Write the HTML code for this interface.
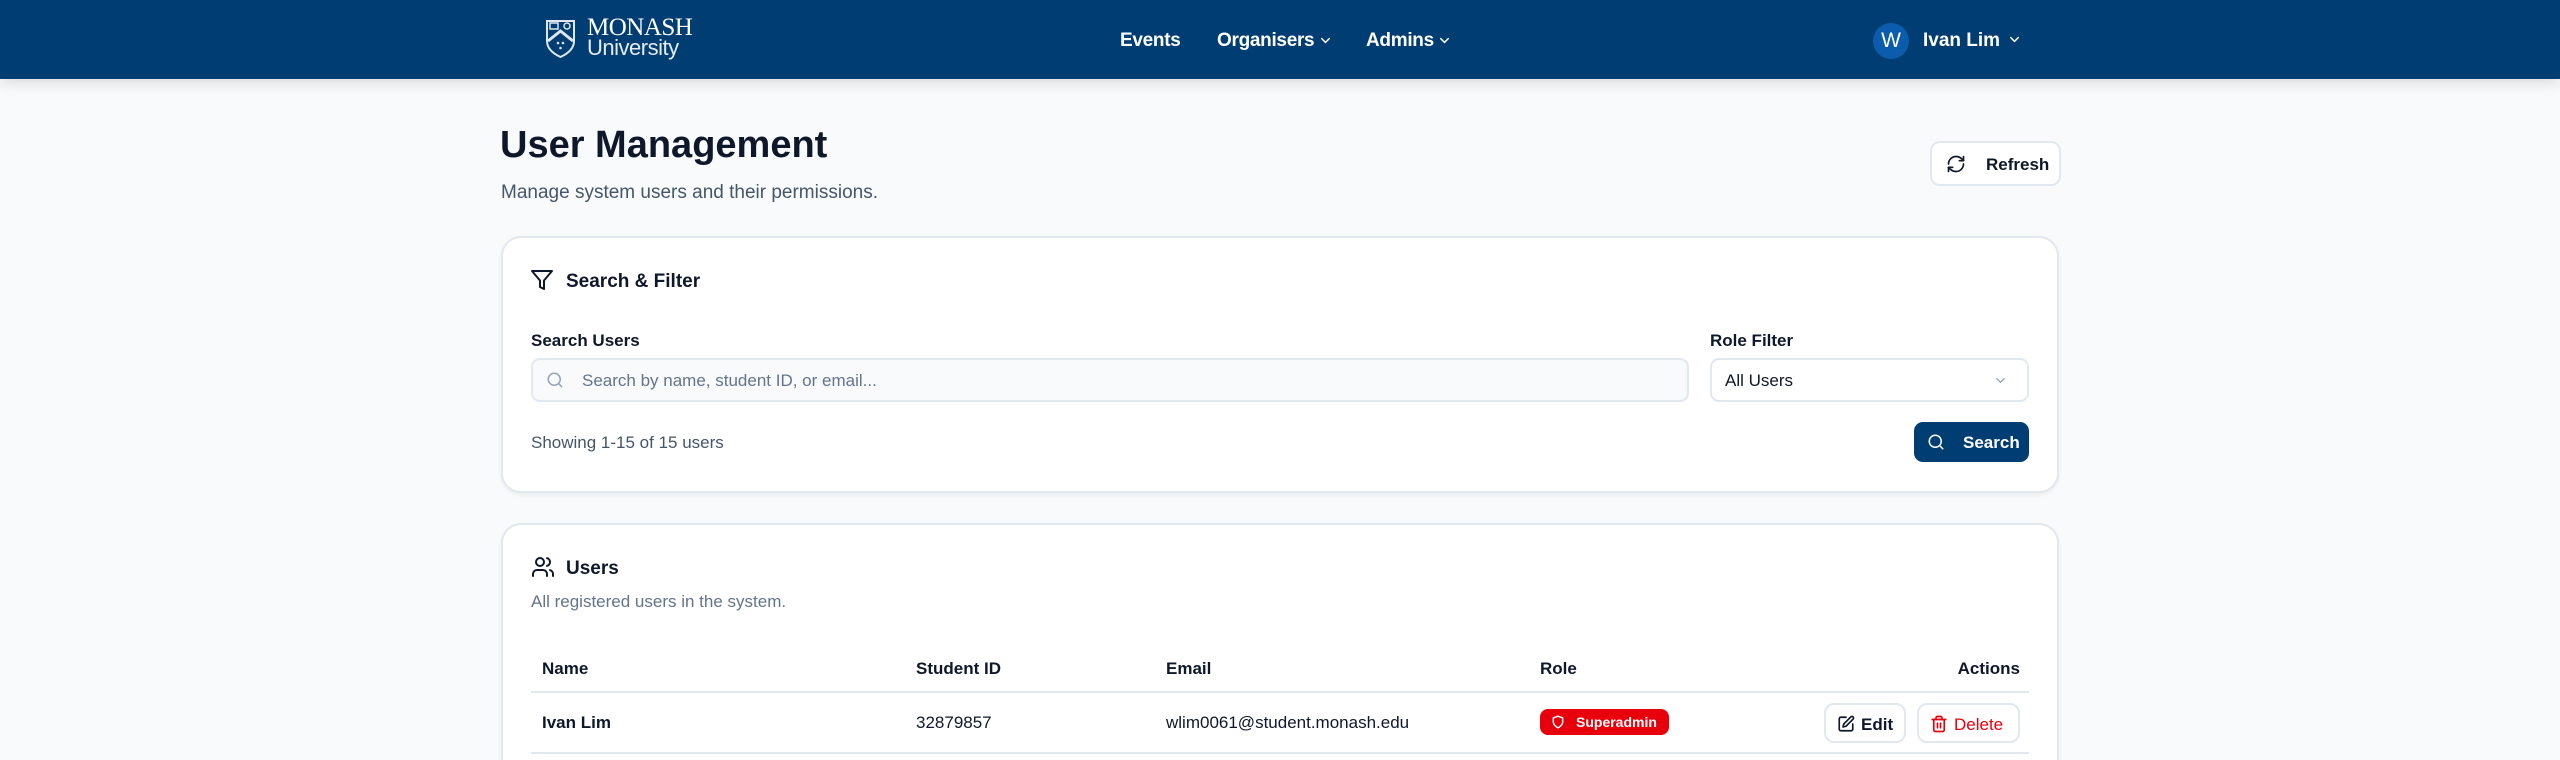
<!DOCTYPE html>
<html><head><meta charset="utf-8"><style>
*{box-sizing:border-box;margin:0;padding:0}
html,body{width:2560px;height:760px;overflow:hidden}
body{background:#f8fafc;font-family:"Liberation Sans",sans-serif;color:#0f172a;position:relative}
.a{position:absolute;white-space:nowrap}
.hdr{position:absolute;left:0;top:0;width:2560px;height:79px;background:#003d72;box-shadow:0 4px 14px rgba(0,0,0,.12)}
.nav{color:#fff;font-size:19px;font-weight:bold;top:30px;letter-spacing:-0.3px}
.card{position:absolute;left:501px;width:1558px;background:#fff;border:2px solid #e2e8f0;border-radius:20px;box-shadow:0 2px 4px rgba(0,0,0,.06)}
.btn{position:absolute;border:2px solid #e2e8f0;border-radius:10px;background:#fff;font-weight:bold;font-size:18px}
.th{font-size:17px;font-weight:bold;top:659px}
.td{font-size:17px;top:713px}
.chev{position:absolute}
</style></head><body>
<div class="hdr"></div>
<svg class="a" style="left:545px;top:19px" width="31" height="39" viewBox="0 0 31 39"><path d="M2 2h27v20c0 8-7 13-13.5 16C9 35 2 30 2 22z" fill="none" stroke="#dfe6ef" stroke-width="2"/><path d="M3 22l12.5-10L28 22" fill="none" stroke="#dfe6ef" stroke-width="3"/><rect x="5" y="4" width="8" height="6" fill="none" stroke="#dfe6ef" stroke-width="1.5"/><circle cx="22" cy="7" r="3" fill="none" stroke="#dfe6ef" stroke-width="1.5"/><circle cx="13" cy="24" r="1.3" fill="#dfe6ef"/><circle cx="18" cy="24" r="1.3" fill="#dfe6ef"/><circle cx="15.5" cy="29" r="1.3" fill="#dfe6ef"/></svg>
<div class="a" style="left:587px;top:17px;color:#fff;font-family:'Liberation Serif',serif;font-size:25px;line-height:22px;letter-spacing:-0.5px">MONASH</div>
<div class="a" style="left:587px;top:37px;color:#e6ecf3;font-size:22px;line-height:22px;letter-spacing:-0.5px">University</div>
<div class="a nav" style="left:1120px">Events</div>
<div class="a nav" style="left:1217px">Organisers</div>
<svg class="chev" style="left:1318px;top:33px" width="15" height="15" viewBox="0 0 24 24" fill="none" stroke="#fff" stroke-width="2.5" stroke-linecap="round"><path d="m6 9 6 6 6-6"/></svg>
<div class="a nav" style="left:1366px">Admins</div>
<svg class="chev" style="left:1437px;top:33px" width="15" height="15" viewBox="0 0 24 24" fill="none" stroke="#fff" stroke-width="2.5" stroke-linecap="round"><path d="m6 9 6 6 6-6"/></svg>
<div class="a" style="left:1873px;top:23px;width:36px;height:36px;border-radius:50%;background:#0b5cad;color:#fff;font-size:21px;text-align:center;line-height:36px">W</div>
<div class="a" style="left:1923px;top:30px;color:#fff;font-size:19px;font-weight:bold">Ivan Lim</div>
<svg class="chev" style="left:2007px;top:32px" width="15" height="15" viewBox="0 0 24 24" fill="none" stroke="#fff" stroke-width="2.5" stroke-linecap="round"><path d="m6 9 6 6 6-6"/></svg>

<div class="a" style="left:500px;top:124px;font-size:38px;font-weight:bold">User Management</div>
<div class="a" style="left:501px;top:182px;font-size:19px;color:#475569">Manage system users and their permissions.</div>
<div class="btn" style="left:1930px;top:141px;width:131px;height:45px">
<svg class="a" style="left:14px;top:11px" width="20" height="20" viewBox="0 0 24 24" fill="none" stroke="#0f172a" stroke-width="2" stroke-linecap="round" stroke-linejoin="round"><path d="M3 12a9 9 0 0 1 9-9 9.75 9.75 0 0 1 6.74 2.74L21 8"/><path d="M21 3v5h-5"/><path d="M21 12a9 9 0 0 1-9 9 9.75 9.75 0 0 1-6.74-2.74L3 16"/><path d="M8 16H3v5"/></svg>
<span class="a" style="left:54px;top:12px;font-size:17px">Refresh</span></div>

<div class="card" style="top:236px;height:257px"></div>
<svg class="a" style="left:530px;top:268px" width="24" height="24" viewBox="0 0 24 24" fill="none" stroke="#0f172a" stroke-width="2" stroke-linejoin="round"><path d="M22 3H2l8 9.46V19l4 2v-8.54z"/></svg>
<div class="a" style="left:566px;top:271px;font-size:19px;font-weight:bold">Search &amp; Filter</div>
<div class="a" style="left:531px;top:331px;font-size:17px;font-weight:bold">Search Users</div>
<div class="a" style="left:1710px;top:331px;font-size:17px;font-weight:bold">Role Filter</div>
<div class="a" style="left:531px;top:358px;width:1158px;height:44px;border:2px solid #e2e8f0;border-radius:9px;background:#f8fafc"></div>
<svg class="a" style="left:546px;top:371px" width="18" height="18" viewBox="0 0 24 24" fill="none" stroke="#94a3b8" stroke-width="2" stroke-linecap="round"><circle cx="11" cy="11" r="8"/><path d="m21 21-4.3-4.3"/></svg>
<div class="a" style="left:582px;top:371px;font-size:17px;color:#64748b">Search by name, student ID, or email...</div>
<div class="a" style="left:1710px;top:358px;width:319px;height:44px;border:2px solid #e2e8f0;border-radius:9px;background:#fff"></div>
<div class="a" style="left:1725px;top:371px;font-size:17px">All Users</div>
<svg class="chev" style="left:1993px;top:373px" width="15" height="15" viewBox="0 0 24 24" fill="none" stroke="#94a3b8" stroke-width="2" stroke-linecap="round"><path d="m6 9 6 6 6-6"/></svg>
<div class="a" style="left:531px;top:433px;font-size:17px;color:#475569">Showing 1-15 of 15 users</div>
<div class="a" style="left:1914px;top:422px;width:115px;height:40px;border-radius:9px;background:#003d72"></div>
<svg class="a" style="left:1927px;top:433px" width="18" height="18" viewBox="0 0 24 24" fill="none" stroke="#fff" stroke-width="2" stroke-linecap="round"><circle cx="11" cy="11" r="8"/><path d="m21 21-4.3-4.3"/></svg>
<div class="a" style="left:1963px;top:433px;font-size:17px;font-weight:bold;color:#fff">Search</div>

<div class="card" style="top:523px;height:260px;border-bottom:none;border-radius:20px 20px 0 0"></div>
<svg class="a" style="left:531px;top:555px" width="24" height="24" viewBox="0 0 24 24" fill="none" stroke="#0f172a" stroke-width="2" stroke-linecap="round"><path d="M16 21v-2a4 4 0 0 0-4-4H6a4 4 0 0 0-4 4v2"/><circle cx="9" cy="7" r="4"/><path d="M22 21v-2a4 4 0 0 0-3-3.87"/><path d="M16 3.13a4 4 0 0 1 0 7.75"/></svg>
<div class="a" style="left:566px;top:558px;font-size:19px;font-weight:bold">Users</div>
<div class="a" style="left:531px;top:592px;font-size:17px;color:#64748b">All registered users in the system.</div>
<div class="a th" style="left:542px">Name</div>
<div class="a th" style="left:916px">Student ID</div>
<div class="a th" style="left:1166px">Email</div>
<div class="a th" style="left:1540px">Role</div>
<div class="a th" style="left:1940px;width:80px;text-align:right">Actions</div>
<div class="a" style="left:531px;top:691px;width:1498px;height:2px;background:#e2e8f0"></div>
<div class="a td" style="left:542px;font-weight:bold">Ivan Lim</div>
<div class="a td" style="left:916px">32879857</div>
<div class="a td" style="left:1166px">wlim0061@student.monash.edu</div>
<div class="a" style="left:1540px;top:709px;width:129px;height:26px;border-radius:8px;background:#e7000b;color:#fff;font-size:14px;font-weight:bold;line-height:26px;padding-left:36px">Superadmin</div>
<svg class="a" style="left:1551px;top:715px" width="14" height="14" viewBox="0 0 24 24" fill="none" stroke="#fff" stroke-width="2.5"><path d="M12 22s8-4 8-10V5l-8-3-8 3v7c0 6 8 10 8 10z"/></svg>
<div class="btn" style="left:1824px;top:703px;width:82px;height:40px"><svg class="a" style="left:11px;top:10px" width="18" height="18" viewBox="0 0 24 24" fill="none" stroke="#0f172a" stroke-width="2.2" stroke-linecap="round" stroke-linejoin="round"><path d="M12 3H5a2 2 0 0 0-2 2v14a2 2 0 0 0 2 2h14a2 2 0 0 0 2-2v-7"/><path d="M18.4 2.6a2.1 2.1 0 0 1 3 3L12 15l-4 1 1-4z"/></svg><span class="a" style="left:35px;top:10px;font-size:17px">Edit</span></div>
<div class="btn" style="left:1917px;top:703px;width:103px;height:40px;color:#e7000b"><svg class="a" style="left:11px;top:10px" width="18" height="18" viewBox="0 0 24 24" fill="none" stroke="#e7000b" stroke-width="2.2" stroke-linecap="round"><path d="M3 6h18"/><path d="M19 6v14a2 2 0 0 1-2 2H7a2 2 0 0 1-2-2V6"/><path d="M8 6V4a2 2 0 0 1 2-2h4a2 2 0 0 1 2 2v2"/><path d="M10 11v6M14 11v6"/></svg><span class="a" style="left:35px;top:10px;font-weight:normal;font-size:17px">Delete</span></div>
<div class="a" style="left:531px;top:752px;width:1498px;height:2px;background:#e2e8f0"></div>
</body></html>
